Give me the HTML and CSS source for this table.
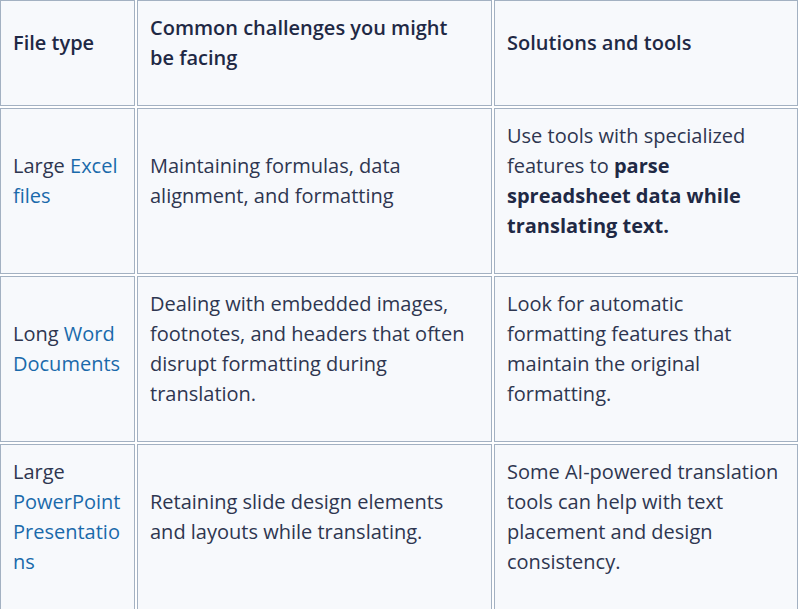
FILE: index.html
```html
<!DOCTYPE html>
<html lang="en">
<head>
<meta charset="utf-8">
<title>File types</title>
<link rel="stylesheet" href="styles.css">
</head>
<body>
<table class="grid">
  <colgroup>
    <col class="c1"><col class="c2"><col class="c3">
  </colgroup>
  <thead>
    <tr>
      <th><p>File type</p></th>
      <th><p>Common challenges you might be facing</p></th>
      <th><p>Solutions and tools</p></th>
    </tr>
  </thead>
  <tbody>
    <tr>
      <td><p>Large <a href="#">Excel files</a></p></td>
      <td><p>Maintaining formulas, data alignment, and formatting</p></td>
      <td><p>Use tools with specialized features to <strong>parse spreadsheet data while translating text.</strong></p></td>
    </tr>
    <tr>
      <td><p>Long <a href="#">Word Documents</a></p></td>
      <td><p>Dealing with embedded images, footnotes, and headers that often disrupt formatting during translation.</p></td>
      <td><p>Look for automatic formatting features that maintain the original formatting.</p></td>
    </tr>
    <tr>
      <td><p>Large <a href="#">PowerPoint Presentations</a></p></td>
      <td><p>Retaining slide design elements and layouts while translating.</p></td>
      <td><p>Some AI-powered translation tools can help with text placement and design consistency.</p></td>
    </tr>
  </tbody>
</table>
</body>
</html>
```
FILE: styles.css
```css
html, body {
  margin: 0;
  padding: 0;
  background: #ffffff;
  overflow: hidden;
}
.grid {
  margin: -2px 0 0 -2px;
  width: 802px;
  table-layout: fixed;
  border-collapse: separate;
  border-spacing: 2px;
  font-family: "Open Sans", "Noto Sans", sans-serif;
  font-size: 20px;
  line-height: 30px;
  color: #2e3650;
}
.c1 { width: 135px; }
.c2 { width: 355px; }
.c3 { width: 304px; }
.grid th,
.grid td {
  box-sizing: border-box;
  border: 1px solid #a3b1c2;
  background: #f7f9fc;
  padding: 12px;
  text-align: left;
  vertical-align: middle;
  word-wrap: break-word;
  overflow-wrap: break-word;
}
.grid p {
  margin: 0 0 20px;
}
.grid th {
  font-weight: 600;
  color: #1f2945;
  padding-right: 16px;
}
.grid strong {
  font-weight: 700;
  color: #1f2945;
}
.grid a {
  color: #1a6aab;
  text-decoration: none;
}
```
